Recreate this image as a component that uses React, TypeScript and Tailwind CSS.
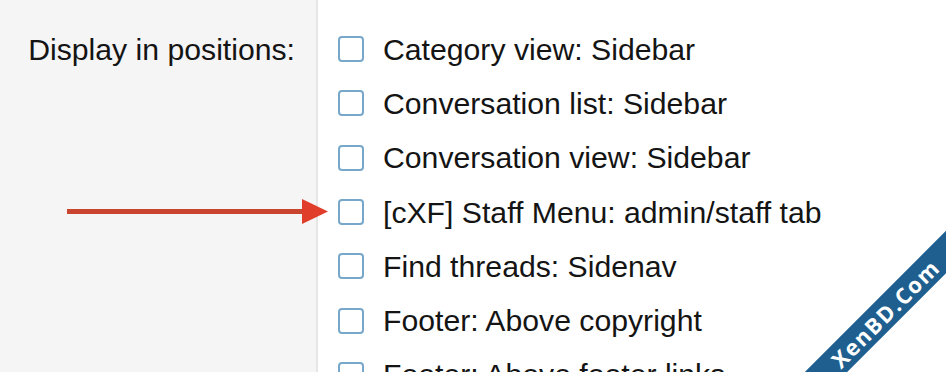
import React from 'react';

const positions = [
  'Category view: Sidebar',
  'Conversation list: Sidebar',
  'Conversation view: Sidebar',
  '[cXF] Staff Menu: admin/staff tab',
  'Find threads: Sidenav',
  'Footer: Above copyright',
  'Footer: Above footer links',
];

const App: React.FC = () => {
  return (
    <div className="relative flex h-[372px] w-full overflow-hidden bg-white font-['Liberation_Sans',Arial,sans-serif] text-[30.2px] text-[#141414]">
      {/* Label column */}
      <div className="w-[318px] shrink-0 border-r-2 border-[#e6e6e6] bg-[#f5f5f5] pt-[22px] pr-[21px]">
        <div className="flex h-[54.33px] items-center justify-end whitespace-nowrap">Display in positions:</div>
      </div>

      {/* Checkbox list */}
      <div className="flex flex-col pt-[22px] pl-[20px]">
        {positions.map((label) => (
          <label key={label} className="flex h-[54.33px] shrink-0 items-center gap-[19px] whitespace-nowrap">
            <span className="h-[26px] w-[26px] shrink-0 rounded-[4px] border-[2.5px] border-[#78a8c9] bg-white" />
            <span>{label}</span>
          </label>
        ))}
      </div>

      {/* Annotation arrow */}
      <svg className="absolute left-[67px] top-[199px]" width="262" height="25" viewBox="0 0 262 25">
        <line x1="0" y1="12.5" x2="240" y2="12.5" stroke="#c9452f" strokeWidth="5" />
        <polygon points="235,0 261,12.5 235,25" fill="#e03d2a" />
      </svg>

      {/* Watermark band */}
      <div className="absolute left-[685px] top-[298px] flex h-[30px] w-[400px] -rotate-45 items-center justify-center bg-[#1e5f8f]">
        <span className="font-['Open_Sans',sans-serif] text-[22px] leading-none font-bold tracking-[1.5px] text-white">XenBD.Com</span>
      </div>
    </div>
  );
};

export default App;
